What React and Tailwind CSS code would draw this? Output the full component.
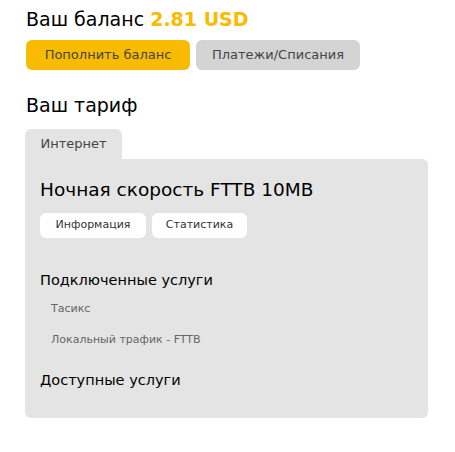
import React from "react";

const App = () => {
  const services = ["Тасикс", "Локальный трафик - FTTB"];

  return (
    <div className="w-[455px] h-[452px] bg-white px-[25px] pt-[6px] font-['DejaVu_Sans',sans-serif]">
      {/* Balance */}
      <h1 className="text-[19px] leading-[26px] text-black ml-[1px]">
        Ваш баланс <span className="font-bold text-[#f8bb00]">2.81 USD</span>
      </h1>
      <div className="flex gap-[6px] mt-[8px] ml-[1px]">
        <button className="w-[164px] h-[30px] rounded-[6px] bg-[#f8bb00] text-[13px] text-[#444]">
          Пополнить баланс
        </button>
        <button className="w-[164px] h-[30px] rounded-[6px] bg-[#d4d4d4] text-[13px] text-[#444]">
          Платежи/Списания
        </button>
      </div>

      {/* Tariff */}
      <h2 className="text-[19px] leading-[26px] text-black mt-[22px] ml-[1px]">Ваш тариф</h2>
      <div className="mt-[11px]">
        <div className="w-[97px] h-[30px] bg-[#e4e4e4] rounded-t-[6px] flex items-center justify-center text-[13px] text-[#444]">
          Интернет
        </div>
        <div className="w-[403px] bg-[#e4e4e4] rounded-b-[6px] rounded-tr-[6px] px-[15px] pt-[18px] pb-[28px]">
          <div className="text-[18.5px] leading-[26px] text-black">Ночная скорость FTTB 10MB</div>
          <div className="flex gap-[6px] mt-[10px]">
            <button className="w-[106px] h-[25px] rounded-[6px] bg-white text-[11px] text-[#333]">
              Информация
            </button>
            <button className="w-[95px] h-[25px] rounded-[6px] bg-white text-[11px] text-[#333]">
              Статистика
            </button>
          </div>
          <div className="text-[14.5px] leading-[20px] text-black mt-[32px]">Подключенные услуги</div>
          <div className="mt-[9px] ml-[11px] flex flex-col gap-[11px]">
            {services.map((s) => (
              <div key={s} className="text-[11px] leading-[20px] text-[#666]">
                {s}
              </div>
            ))}
          </div>
          <div className="text-[14.5px] leading-[20px] text-black mt-[20px]">Доступные услуги</div>
        </div>
      </div>
    </div>
  );
};

export default App;
